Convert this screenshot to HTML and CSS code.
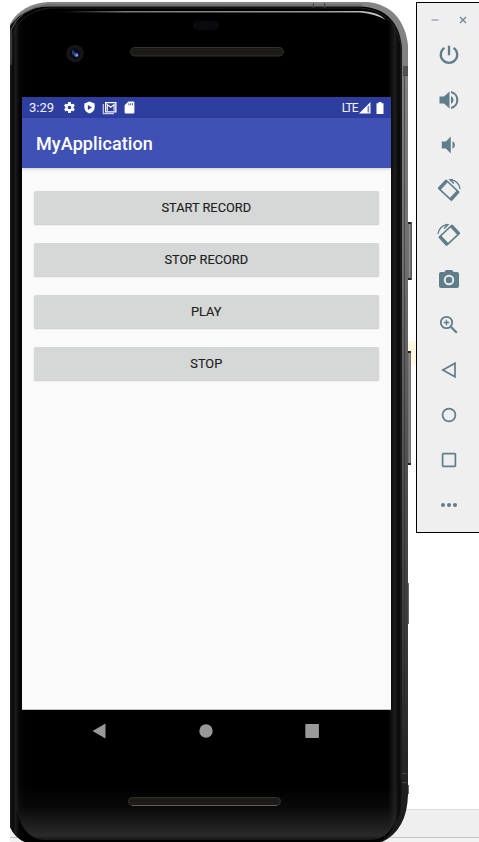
FILE: index.html
```html
<!DOCTYPE html>
<html lang="en">
<head>
<meta charset="utf-8">
<title>Android Emulator</title>
<link rel="stylesheet" href="styles.css">
</head>
<body>
<main class="desktop">
  <section class="phone">
    <svg class="shell" viewBox="10 0 469 842" width="469" height="842" aria-hidden="true">
      <defs>
        <linearGradient id="rim" x1="0" y1="0" x2="0" y2="1">
          <stop offset="0" stop-color="#858585"/><stop offset=".3" stop-color="#707070"/><stop offset=".5" stop-color="#565656"/><stop offset=".75" stop-color="#3b3b3b"/><stop offset="1" stop-color="#181818"/>
        </linearGradient>
        <linearGradient id="side" x1="0" x2="1">
          <stop offset="0" stop-color="#1c1c1c"/><stop offset=".008" stop-color="#090909"/><stop offset=".014" stop-color="#1c1c1c"/><stop offset=".024" stop-color="#050505"/><stop offset=".04" stop-color="#000"/><stop offset=".965" stop-color="#000"/><stop offset=".982" stop-color="#1d1d1d"/><stop offset=".992" stop-color="#080808"/><stop offset="1" stop-color="#1a1a1a"/>
        </linearGradient>
        <linearGradient id="chin" x1="0" y1="0" x2="0" y2="1">
          <stop offset="0" stop-color="#2a2a2a" stop-opacity="0"/><stop offset=".4" stop-color="#2a2a2a" stop-opacity=".2"/><stop offset=".92" stop-color="#2a2a2a"/><stop offset="1" stop-color="#161616"/>
        </linearGradient>
        <linearGradient id="shine" x1="0" x2="1">
          <stop offset="0" stop-color="#666" stop-opacity="0"/><stop offset=".2" stop-color="#777"/><stop offset=".8" stop-color="#999"/><stop offset="1" stop-color="#c5cccc"/>
        </linearGradient>
        <linearGradient id="key" x1="0" x2="1">
          <stop offset="0" stop-color="#555"/><stop offset=".5" stop-color="#888"/><stop offset="1" stop-color="#4a4a4a"/>
        </linearGradient>
        <pattern id="mesh" width="4" height="4" patternUnits="userSpaceOnUse">
          <rect width="4" height="4" fill="#171613"/><path d="M1 0v4M3 1v3" stroke="#282622" stroke-width=".8"/>
        </pattern>
      </defs>
      <path d="M10 809.5h469" stroke="#ddd"/>
      <path d="M10 810h469v27H10z" fill="#efefef"/>
      <path d="M10 837.5h469" stroke="#c5c5c5"/>
      <path d="M10 838h469v4H10z" fill="#f2f2f2"/>
      <path d="M406 341h10v24h-10z" fill="#fff9e1"/>
      <path d="M407 222h5v58h-5zM407 351h4v114h-4z" fill="url(#key)"/>
      <path d="M407 222h4v2h-4zM407 278h4v2h-4zM407 351h4v2h-4zM407 463h4v2h-4z" fill="#222"/>
      <path d="M407 583h2v41h-2zM407 785h2v9h-2z" fill="#666"/>
      <path d="M10 24C18 10 31 3 48 2H365C391 3 405 20 408 45V795Q407 830 382 842H25Q15 838 10 827z" fill="url(#rim)"/>
      <path d="M10 26C20 12 33 6.500 50 6.500H360C387 7.500 401 24 402 50V795Q401 830 379 842H25Q15 838 10 827z" fill="url(#side)"/>
      <path d="M16 785H398V802Q396 840 369 840H43Q19 837 16 802z" fill="url(#chin)"/>
      <path d="M12 60V40Q17 13 48 8H360Q393 10 401 45V780" fill="none" stroke="#222"/>
      <path d="M11 65V30Q19 9 47 5H362" fill="none" stroke="#5c5c5c"/>
      <path d="M404.5 73V780" stroke="#282828" opacity=".55"/>
      <path d="M60 11H362Q379 12 386 20Q376 14 360 12.500H60z" fill="url(#shine)"/>
      <path d="M403 66h5v9h-5z" fill="#515151"/><path d="M403 75.500h5M313.500 3v5M324.500 3v5M402 773.500h5M402 782.500h5" stroke="#444" fill="none"/>
      <rect x="193" y="21" width="26" height="9" rx="4.500" fill="#090a0e"/>
      <circle cx="75" cy="53.500" r="8.700" fill="#161616"/><circle cx="75" cy="53.500" r="5.400" fill="#080b18"/>
      <path d="M72 50l3 2v4l-3-2z" fill="#233c83"/><circle cx="76.500" cy="55" r="2" fill="#5572c3"/><circle cx="77" cy="55.500" r=".8" fill="#aebcf0"/>
      <rect x="130.500" y="47.500" width="153" height="8.500" rx="4.250" fill="url(#mesh)" stroke="#32322f"/>
      <rect x="128.500" y="797.500" width="152" height="8" rx="4" fill="url(#mesh)" stroke="#32312e"/>
      <path d="M132 805.500h145" stroke="#625f57"/>
    </svg>
    <div class="screen">
      <header class="status">
        <span class="clock">3:29</span>
        <svg class="notice" viewBox="0 0 24 24"><path fill-rule="evenodd" d="M19.400 13a7.500 7.500 0 0 0 0-2l2.100-1.600a.5.5 0 0 0 .1-.7l-2-3.400a.5.5 0 0 0-.6-.2l-2.500 1a7 7 0 0 0-1.700-1l-.4-2.600a.5.5 0 0 0-.5-.5h-4a.5.5 0 0 0-.5.500L9 5.100a8 8 0 0 0-1.700 1l-2.500-1a.5.5 0 0 0-.6.200l-2 3.400a.5.5 0 0 0 .1.700L4.500 11a8 8 0 0 0 0 2l-2.200 1.600a.5.5 0 0 0-.1.700l2 3.400c.1.200.4.300.6.200l2.500-1a7 7 0 0 0 1.700 1l.4 2.600c0 .3.200.5.500.5h4c.3 0 .5-.2.500-.5l.4-2.600a8 8 0 0 0 1.700-1l2.500 1c.2.100.5 0 .6-.2l2-3.400a.5.5 0 0 0-.1-.7zM12 15.300a3.300 3.300 0 1 1 0-6.600 3.300 3.300 0 0 1 0 6.600z"/></svg>
        <svg class="notice" viewBox="0 0 24 24"><path fill-rule="evenodd" d="M12 1 2.500 4.500V12c0 5 4 9.500 9.500 11 5.500-1.500 9.500-6 9.500-11V4.500zM9 7.500l7.500 4.500L9 16.500z"/></svg>
        <svg class="notice wide" viewBox="0 0 15 14"><path d="M1.300 3v9.700H12" fill="none" stroke="#c9cee9" stroke-width="1.200"/><path fill-rule="evenodd" d="M3 1h11.500v10.500H3zM4.300 2.300v7.900h8.900V2.300z"/><path d="M5.300 9.800V3.600l3.400 2.600 3.400-2.600v6.200" fill="none" stroke="#fff" stroke-width="1.100"/></svg>
        <svg class="notice" viewBox="0 0 24 24"><path fill-rule="evenodd" d="M10 1h9a2 2 0 0 1 2 2v18a2 2 0 0 1-2 2H5a2 2 0 0 1-2-2V8zM10 4v4h1.600V4zm3.500 0v4H15V4zM17 4v4h1.500V4z"/></svg>
        <span class="network">LTE</span>
        <svg class="signal" viewBox="0 0 12 12"><path d="M0 11.500 11.500 0v11.500z"/><path d="M8.500 4h1.700v6.500H8.500z" fill="#7480c1"/></svg>
        <svg class="battery" viewBox="0 0 8 12"><path d="M2.500 0h3v1.300H7.500V12h-7V1.300h2z"/></svg>
      </header>
      <div class="appbar">MyApplication</div>
      <div class="content">
        <button>START RECORD</button>
        <button>STOP RECORD</button>
        <button>PLAY</button>
        <button>STOP</button>
      </div>
    </div>
    <nav class="navbar">
      <svg viewBox="0 0 16 16"><path d="M1.500 8 14.500.5v15z"/></svg>
      <svg viewBox="0 0 16 16"><circle cx="8" cy="8" r="6.700"/></svg>
      <svg viewBox="0 0 16 16"><rect x="1.300" y="1" width="13.600" height="14" rx=".7"/></svg>
    </nav>
  </section>
  <aside class="tools">
    <div class="window-actions">
      <svg viewBox="0 0 8 8"><path d="M.5 4h7" stroke="#a9bac1" stroke-width="1.800"/></svg>
      <svg viewBox="0 0 8 8"><path d="m1 1 6 6m0-6L1 7" stroke="#6f8995" stroke-width="1.400"/></svg>
    </div>
    <svg viewBox="0 0 24 24"><path class="line" d="M12 2.700v9.600M7.400 4.900a8.200 8.200 0 1 0 9.200 0" stroke-width="2.300"/></svg>
    <svg viewBox="0 0 24 24"><path d="M2.500 8.500v7h4.500l5.500 5V3.500L7 8.500zM14 8v8a4.400 4.400 0 0 0 0-8z"/><path class="line" d="M14 4.100a8.100 8.100 0 0 1 0 15.800" stroke-width="2.100"/></svg>
    <svg viewBox="0 0 24 24"><path d="M4.800 8.500v7h4l5 5v-17l-5 5zM15.500 8v8a4.500 4.500 0 0 0 0-8z"/></svg>
    <svg viewBox="0 0 24 24"><path transform="translate(11.700 12.200) rotate(43)" fill-rule="evenodd" d="M-8.300-6.300H8.300a1.300 1.300 0 0 1 1.300 1.300v10A1.300 1.300 0 0 1 8.300 6.300H-8.300a1.300 1.300 0 0 1-1.300-1.300v-10A1.300 1.300 0 0 1-8.300-6.300zM-6.100-4.700v9.400H6.100v-9.400z"/><path class="line" d="M14 1.900c5 .2 8.500 4.200 9.100 9.100" stroke-width="1.300"/><path d="m11.500 1.300 4.300-.5-.4 2.300 2 2-1 .8z"/></svg>
    <svg class="mirror" viewBox="0 0 24 24"><path transform="translate(11.700 12.200) rotate(43)" fill-rule="evenodd" d="M-8.300-6.300H8.300a1.300 1.300 0 0 1 1.300 1.300v10A1.300 1.300 0 0 1 8.300 6.300H-8.300a1.300 1.300 0 0 1-1.300-1.300v-10A1.300 1.300 0 0 1-8.300-6.300zM-6.100-4.700v9.400H6.100v-9.400z"/><path class="line" d="M14 1.900c5 .2 8.500 4.200 9.100 9.100" stroke-width="1.300"/><path d="m11.500 1.300 4.300-.5-.4 2.300 2 2-1 .8z"/></svg>
    <svg viewBox="0 0 24 24"><path fill-rule="evenodd" d="M9 2 7.200 4H4a2 2 0 0 0-2 2v12a2 2 0 0 0 2 2h16a2 2 0 0 0 2-2V6a2 2 0 0 0-2-2h-3.200L15 2zM12 6.800a5.200 5.200 0 1 1 0 10.400 5.200 5.200 0 0 1 0-10.400z"/><circle cx="12" cy="12" r="3.300"/></svg>
    <svg viewBox="0 0 24 24"><path class="line" d="M15.200 9.500a5.700 5.700 0 1 1-11.400 0 5.700 5.700 0 0 1 11.400 0z" stroke-width="1.800"/><path class="line" d="M9.500 6.700v5.600M6.700 9.500h5.600" stroke-width="1.400"/><path class="line" d="m14 14 5.800 5.800" stroke-width="2.200"/></svg>
    <svg viewBox="0 0 24 24"><path class="line" d="M5.800 12 18 5.200v13.600z" stroke-width="1.700"/></svg>
    <svg viewBox="0 0 24 24"><circle class="line" cx="12" cy="12" r="6.400" stroke-width="1.700"/></svg>
    <svg viewBox="0 0 24 24"><rect class="line" x="5.600" y="5.600" width="12.800" height="12.800" rx=".8" stroke-width="1.700"/></svg>
    <svg viewBox="0 0 24 24"><circle cx="6" cy="12" r="2.050"/><circle cx="12" cy="12" r="2.050"/><circle cx="18" cy="12" r="2.050"/></svg>
  </aside>
</main>
</body>
</html>
```
FILE: styles.css
```css
* { box-sizing: border-box; }
body { margin: 0; background: #fff; font-family: Roboto, sans-serif; overflow: hidden; }
svg { display: block; flex: none; }
.desktop { display: flex; width: 479px; height: 842px; padding-left: 10px; overflow: hidden; }
.phone { position: relative; width: 406px; flex: none; padding: 97px 25px 0 12px; }
.shell { position: absolute; top: 0; left: 0; }
.screen { position: relative; height: 613px; background: #fafafa; border-bottom: 1px solid #b9c4bf; }
.status { display: flex; align-items: center; height: 21px; padding: 0 7px; background: #2d3e9f; color: #f4f5fb; }
.status svg { fill: #fff; }
.clock { width: 34px; font-size: 13px; line-height: 21px; }
.notice { width: 13px; height: 13px; margin-right: 7px; }
.notice.wide { width: 15px; height: 14px; margin: 0 6px 0 -1px; }
.network { margin-left: auto; font-size: 12px; letter-spacing: -1px; }
.signal { width: 12px; height: 12px; margin-left: 1.5px; }
.battery { width: 8px; height: 12px; margin-left: 5px; }
.appbar { height: 50px; padding-left: 14px; background: #3f51b5; color: #fff; font-size: 18px; font-weight: 500; letter-spacing: .1px; line-height: 52px; box-shadow: 0 1px 3px rgba(0, 0, 0, .2); }
.content { display: flex; flex-direction: column; gap: 19px; padding: 23px 12px 0 11.5px; }
.content button { height: 33px; padding: 0; border: 0; border-radius: 1.5px; background: #d6d8d7; color: #202121; font: 400 12.8px Roboto, sans-serif; -webkit-text-stroke: .15px #202121; box-shadow: 0 1px 1.5px rgba(0, 0, 0, .2); }
.navbar { position: relative; display: flex; justify-content: space-between; padding: 13px 71px 0 69px; }
.navbar svg { width: 16px; height: 16px; fill: #999; }
.tools { display: flex; flex-direction: column; align-items: center; gap: 21px; flex: none; width: 66px; height: 531px; margin-top: 2px; border: 1px solid #000; background: #efefef; }
.tools > svg { width: 24px; height: 24px; fill: #607d8b; }
.tools .line { fill: none; stroke: #607d8b; }
.tools .mirror { transform: scaleX(-1); }
.window-actions { display: flex; gap: 20px; height: 19px; padding-top: 13px; }
.window-actions svg { width: 8px; height: 8px; }
```
